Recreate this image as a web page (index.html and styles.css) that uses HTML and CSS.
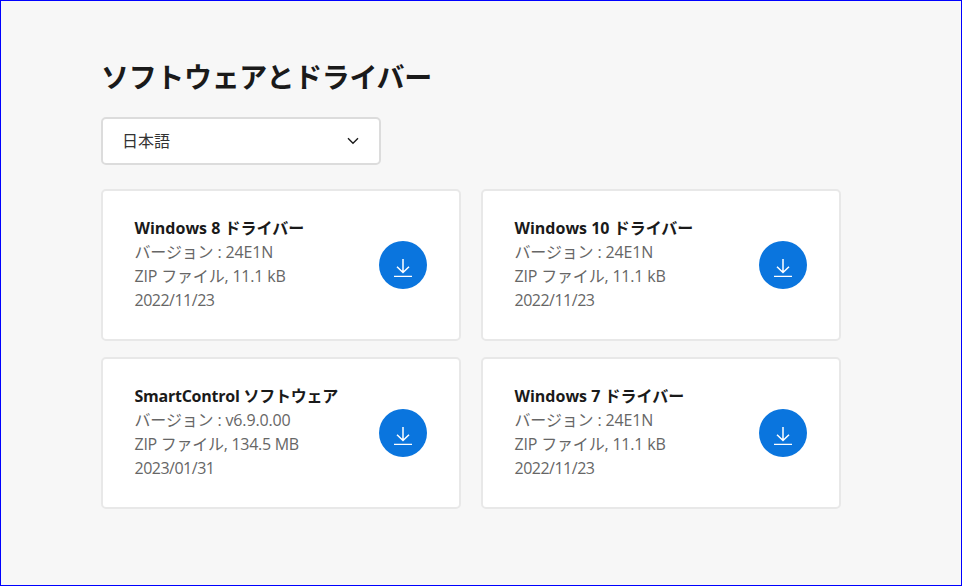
FILE: index.html
```html
<!DOCTYPE html>
<html lang="ja">
<head>
<meta charset="utf-8">
<title>ソフトウェアとドライバー</title>
<link rel="stylesheet" href="styles.css">
</head>
<body>
<main class="section">
  <h1 class="heading">ソフトウェアとドライバー</h1>
  <div class="select">
    <span class="select-label">日本語</span>
    <svg class="chevron" width="12" height="8" viewBox="0 0 12 8"><path d="M1 1.2 6 6.2 11 1.2" fill="none" stroke="#1a1a1a" stroke-width="1.4"/></svg>
  </div>
  <div class="grid">
    <article class="card">
      <div class="info">
        <h2 class="title">Windows 8 ドライバー</h2>
        <p class="meta">バージョン : 24E1N</p>
        <p class="meta size">ZIP ファイル, 11.1 kB</p>
        <p class="meta date">2022/11/23</p>
      </div>
      <a class="download"><svg width="24" height="24" viewBox="0 0 24 24"><path d="M12 6V19.5M6 13.7 12 19.5 18 13.7M3 23.5H21" fill="none" stroke="#fff" stroke-width="1.5"/></svg></a>
    </article>
    <article class="card">
      <div class="info">
        <h2 class="title">Windows 10 ドライバー</h2>
        <p class="meta">バージョン : 24E1N</p>
        <p class="meta size">ZIP ファイル, 11.1 kB</p>
        <p class="meta date">2022/11/23</p>
      </div>
      <a class="download"><svg width="24" height="24" viewBox="0 0 24 24"><path d="M12 6V19.5M6 13.7 12 19.5 18 13.7M3 23.5H21" fill="none" stroke="#fff" stroke-width="1.5"/></svg></a>
    </article>
    <article class="card">
      <div class="info">
        <h2 class="title tight">SmartControl ソフトウェア</h2>
        <p class="meta">バージョン : v6.9.0.00</p>
        <p class="meta size long">ZIP ファイル, 134.5 MB</p>
        <p class="meta date">2023/01/31</p>
      </div>
      <a class="download"><svg width="24" height="24" viewBox="0 0 24 24"><path d="M12 6V19.5M6 13.7 12 19.5 18 13.7M3 23.5H21" fill="none" stroke="#fff" stroke-width="1.5"/></svg></a>
    </article>
    <article class="card">
      <div class="info">
        <h2 class="title">Windows 7 ドライバー</h2>
        <p class="meta">バージョン : 24E1N</p>
        <p class="meta size">ZIP ファイル, 11.1 kB</p>
        <p class="meta date">2022/11/23</p>
      </div>
      <a class="download"><svg width="24" height="24" viewBox="0 0 24 24"><path d="M12 6V19.5M6 13.7 12 19.5 18 13.7M3 23.5H21" fill="none" stroke="#fff" stroke-width="1.5"/></svg></a>
    </article>
  </div>
</main>
</body>
</html>
```
FILE: styles.css
```css
* { box-sizing: border-box; }
html, body { height: 100%; }
body {
  margin: 0;
  font-family: "Open Sans", "Noto Sans CJK JP", sans-serif;
  background: #f7f7f7;
  color: #1a1a1a;
  overflow: hidden;
}
.section {
  height: 100%;
  border: 1px solid #0000ff;
  padding: 57px 100px 0;
}
.heading {
  margin: 0 0 21px;
  font-size: 28px;
  line-height: 38px;
  font-weight: 700;
  letter-spacing: -0.33px;
}
.select {
  width: 280px;
  height: 48px;
  background: #fff;
  border: 2px solid #dcdcdc;
  border-radius: 5px;
  padding: 0 20px 0 19px;
  display: flex;
  align-items: center;
  justify-content: space-between;
  font-size: 16px;
  color: #333;
}
.select-label { padding-bottom: 2px; }
.grid {
  margin-top: 24px;
  width: 740px;
  display: grid;
  grid-template-columns: 360px 360px;
  column-gap: 20px;
  row-gap: 16px;
}
.card {
  height: 152px;
  background: #fff;
  border: 2px solid #e8e8e8;
  border-radius: 5px;
  padding: 0 32px 0 31.5px;
  display: flex;
  align-items: center;
  justify-content: space-between;
}
.info { padding-bottom: 2px; }
.title {
  margin: 0;
  font-size: 16px;
  line-height: 24px;
  font-weight: 700;
  color: #1a1a1a;
}
.tight { letter-spacing: -0.25px; }
.meta {
  margin: 0;
  font-size: 16px;
  line-height: 24px;
  color: #666;
  letter-spacing: -0.15px;
}
.size { letter-spacing: -0.18px; }
.long { letter-spacing: -0.28px; }
.date { letter-spacing: -0.5px; }
.download {
  width: 48px;
  height: 48px;
  border-radius: 50%;
  background: #0a75de;
  display: flex;
  align-items: center;
  justify-content: center;
}
```
